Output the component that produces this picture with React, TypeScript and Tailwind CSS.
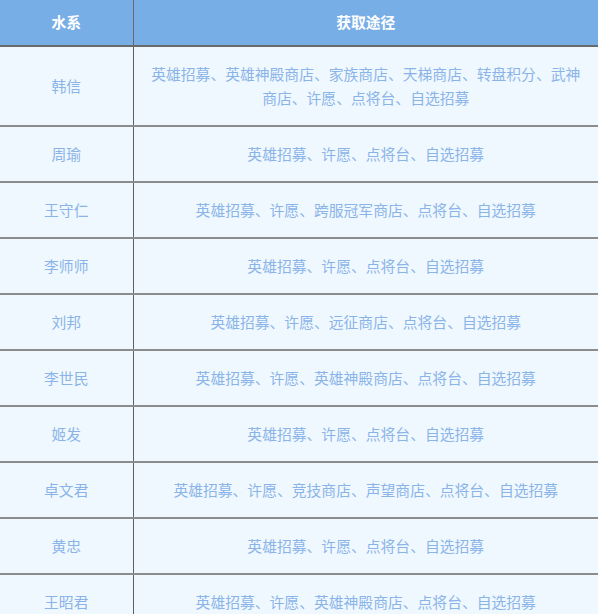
import React from 'react';

const rows: { name: string; ways: string; tall?: boolean }[] = [
  { name: '韩信', ways: '英雄招募、英雄神殿商店、家族商店、天梯商店、转盘积分、武神商店、许愿、点将台、自选招募', tall: true },
  { name: '周瑜', ways: '英雄招募、许愿、点将台、自选招募' },
  { name: '王守仁', ways: '英雄招募、许愿、跨服冠军商店、点将台、自选招募' },
  { name: '李师师', ways: '英雄招募、许愿、点将台、自选招募' },
  { name: '刘邦', ways: '英雄招募、许愿、远征商店、点将台、自选招募' },
  { name: '李世民', ways: '英雄招募、许愿、英雄神殿商店、点将台、自选招募' },
  { name: '姬发', ways: '英雄招募、许愿、点将台、自选招募' },
  { name: '卓文君', ways: '英雄招募、许愿、竞技商店、声望商店、点将台、自选招募' },
  { name: '黄忠', ways: '英雄招募、许愿、点将台、自选招募' },
  { name: '王昭君', ways: '英雄招募、许愿、英雄神殿商店、点将台、自选招募' },
];

export default function App() {
  return (
    <div
      className="w-[598px] h-[614px] overflow-hidden bg-[#f0f8ff]"
      style={{ fontFamily: '"Noto Sans CJK SC", "Noto Sans", sans-serif' }}
    >
      <table className="w-full border-collapse text-[14.8px]">
        <thead>
          <tr className="h-[46px] bg-[#78aee6] text-white">
            <th className="w-[133px] border-r border-b-2 border-[#6a6a6a] font-bold">水系</th>
            <th className="border-b-2 border-[#6a6a6a] font-bold">获取途径</th>
          </tr>
        </thead>
        <tbody className="text-[#8ab4e8]">
          {rows.map((r) => (
            <tr key={r.name} className={r.tall ? 'h-[80px]' : 'h-[56px]'}>
              <td className="border-r border-b-2 border-r-[#5e5e5e] border-b-[#8c8c8c] text-center">{r.name}</td>
              <td className="border-b-2 border-[#8c8c8c] px-[14px] text-center leading-[24px]">
                {r.ways}
              </td>
            </tr>
          ))}
        </tbody>
      </table>
    </div>
  );
}
